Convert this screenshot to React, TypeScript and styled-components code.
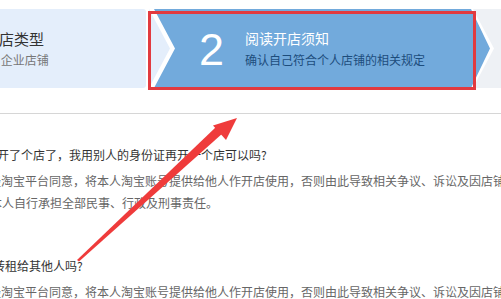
import styled, { createGlobalStyle } from 'styled-components';

const GlobalStyle = createGlobalStyle`
  html, body {
    margin: 0;
    padding: 0;
    background: #ffffff;
    overflow: hidden;
  }
  body {
    font-family: "Noto Sans CJK SC", "Liberation Sans", sans-serif;
  }
`;

const Page = styled.div`
  position: relative;
  width: 501px;
  height: 299px;
  overflow: hidden;
  background: #ffffff;
`;

const StepBar = styled.div`
  display: flex;
  height: 79px;
  margin-top: 9px;
`;

const DoneStep = styled.div`
  width: 146px;
  margin-right: 3px;
  background: #e4eefb;
  border-radius: 0 3px 3px 0;
  display: flex;
  flex-direction: column;
  justify-content: center;
  gap: 4px;
  overflow: hidden;
  white-space: nowrap;
`;

const DoneTitle = styled.div`
  font-size: 15px;
  line-height: 18px;
  color: #333333;
  margin-left: -46px;
`;

const DoneSub = styled.div`
  font-size: 12px;
  line-height: 16px;
  color: #777777;
  margin-left: -14px;
`;

const ActiveStep = styled.div`
  position: relative;
  width: 345px;
  flex-shrink: 0;
  display: flex;
  align-items: center;
`;

const StepShape = styled.svg`
  position: absolute;
  inset: 0;
`;

const StepNumber = styled.div`
  position: relative;
  margin-left: 50px;
  width: 46px;
  font-family: "Liberation Sans", Arial, sans-serif;
  font-size: 45px;
  line-height: 45px;
  color: #ffffff;
  margin-top: 1px;
`;

const StepText = styled.div`
  position: relative;
  display: flex;
  flex-direction: column;
  gap: 6px;
`;

const StepTitle = styled.div`
  font-size: 14px;
  line-height: 16px;
  color: #ffffff;
`;

const StepSub = styled.div`
  font-size: 12px;
  line-height: 15px;
  color: #1d4d7c;
`;

const NextStep = styled.div`
  flex: 1;
  background: #eef1f5;
`;

const Divider = styled.div`
  height: 1px;
  background: #d6d6d6;
  margin-top: 25px;
`;

const Faq = styled.div`
  display: flex;
  flex-direction: column;
  padding-top: 30px;
`;

const Item = styled.div`
  display: flex;
  flex-direction: column;
  margin-bottom: 41px;
`;

const Line = styled.div<{ $shift: number; $question?: boolean }>`
  white-space: nowrap;
  overflow: hidden;
  font-size: 12px;
  line-height: 22px;
  color: ${({ $question }) => ($question ? '#333333' : '#666666')};
  margin-left: ${({ $shift }) => $shift}px;
  margin-bottom: ${({ $question }) => ($question ? '4px' : '0')};
`;

const Annotation = styled.svg`
  position: absolute;
  left: 0;
  top: 0;
  pointer-events: none;
`;

const answer =
  '未经淘宝平台同意，将本人淘宝账号提供给他人作开店使用，否则由此导致相关争议、诉讼及因店铺经营中的违法违规行为';

export default function App() {
  return (
    <Page>
      <GlobalStyle />
      <StepBar>
        <DoneStep>
          <DoneTitle>选择开店类型</DoneTitle>
          <DoneSub>或 企业店铺</DoneSub>
        </DoneStep>
        <ActiveStep>
          <StepShape width="345" height="79" viewBox="0 0 345 79">
            <rect x="322" y="0" width="23" height="79" fill="#eef1f5" />
            <polygon points="0,0 324,0 345,39.5 324,79 0,79" fill="#ffffff" />
            <polygon points="0,0 21,39.5 0,79" fill="#e4eefb" />
            <polygon points="5,0 322,0 341,39.5 322,79 5,79 26,39.5" fill="#72aadc" />
          </StepShape>
          <StepNumber>2</StepNumber>
          <StepText>
            <StepTitle>阅读开店须知</StepTitle>
            <StepSub>确认自己符合个人店铺的相关规定</StepSub>
          </StepText>
        </ActiveStep>
        <NextStep />
      </StepBar>
      <Divider />
      <Faq>
        <Item>
          <Line $question $shift={-15}>已开了个店了，我用别人的身份证再开一个店可以吗?</Line>
          <Line $shift={-23}>{answer}</Line>
          <Line $shift={-10}>本人自行承担全部民事、行政及刑事责任。</Line>
        </Item>
        <Item>
          <Line $question $shift={-7}>转租给其他人吗?</Line>
          <Line $shift={-23}>{answer}</Line>
        </Item>
      </Faq>
      <Annotation width="501" height="299" viewBox="0 0 501 299">
        <rect x="149.5" y="12.5" width="325" height="76" fill="none" stroke="#e23a3f" strokeWidth="3" />
        <polygon points="77,260 79,261.5 223,133 216,127" fill="#ef3b3b" />
        <polygon points="237,118 213,125.5 226,140" fill="#ef3b3b" />
      </Annotation>
    </Page>
  );
}
